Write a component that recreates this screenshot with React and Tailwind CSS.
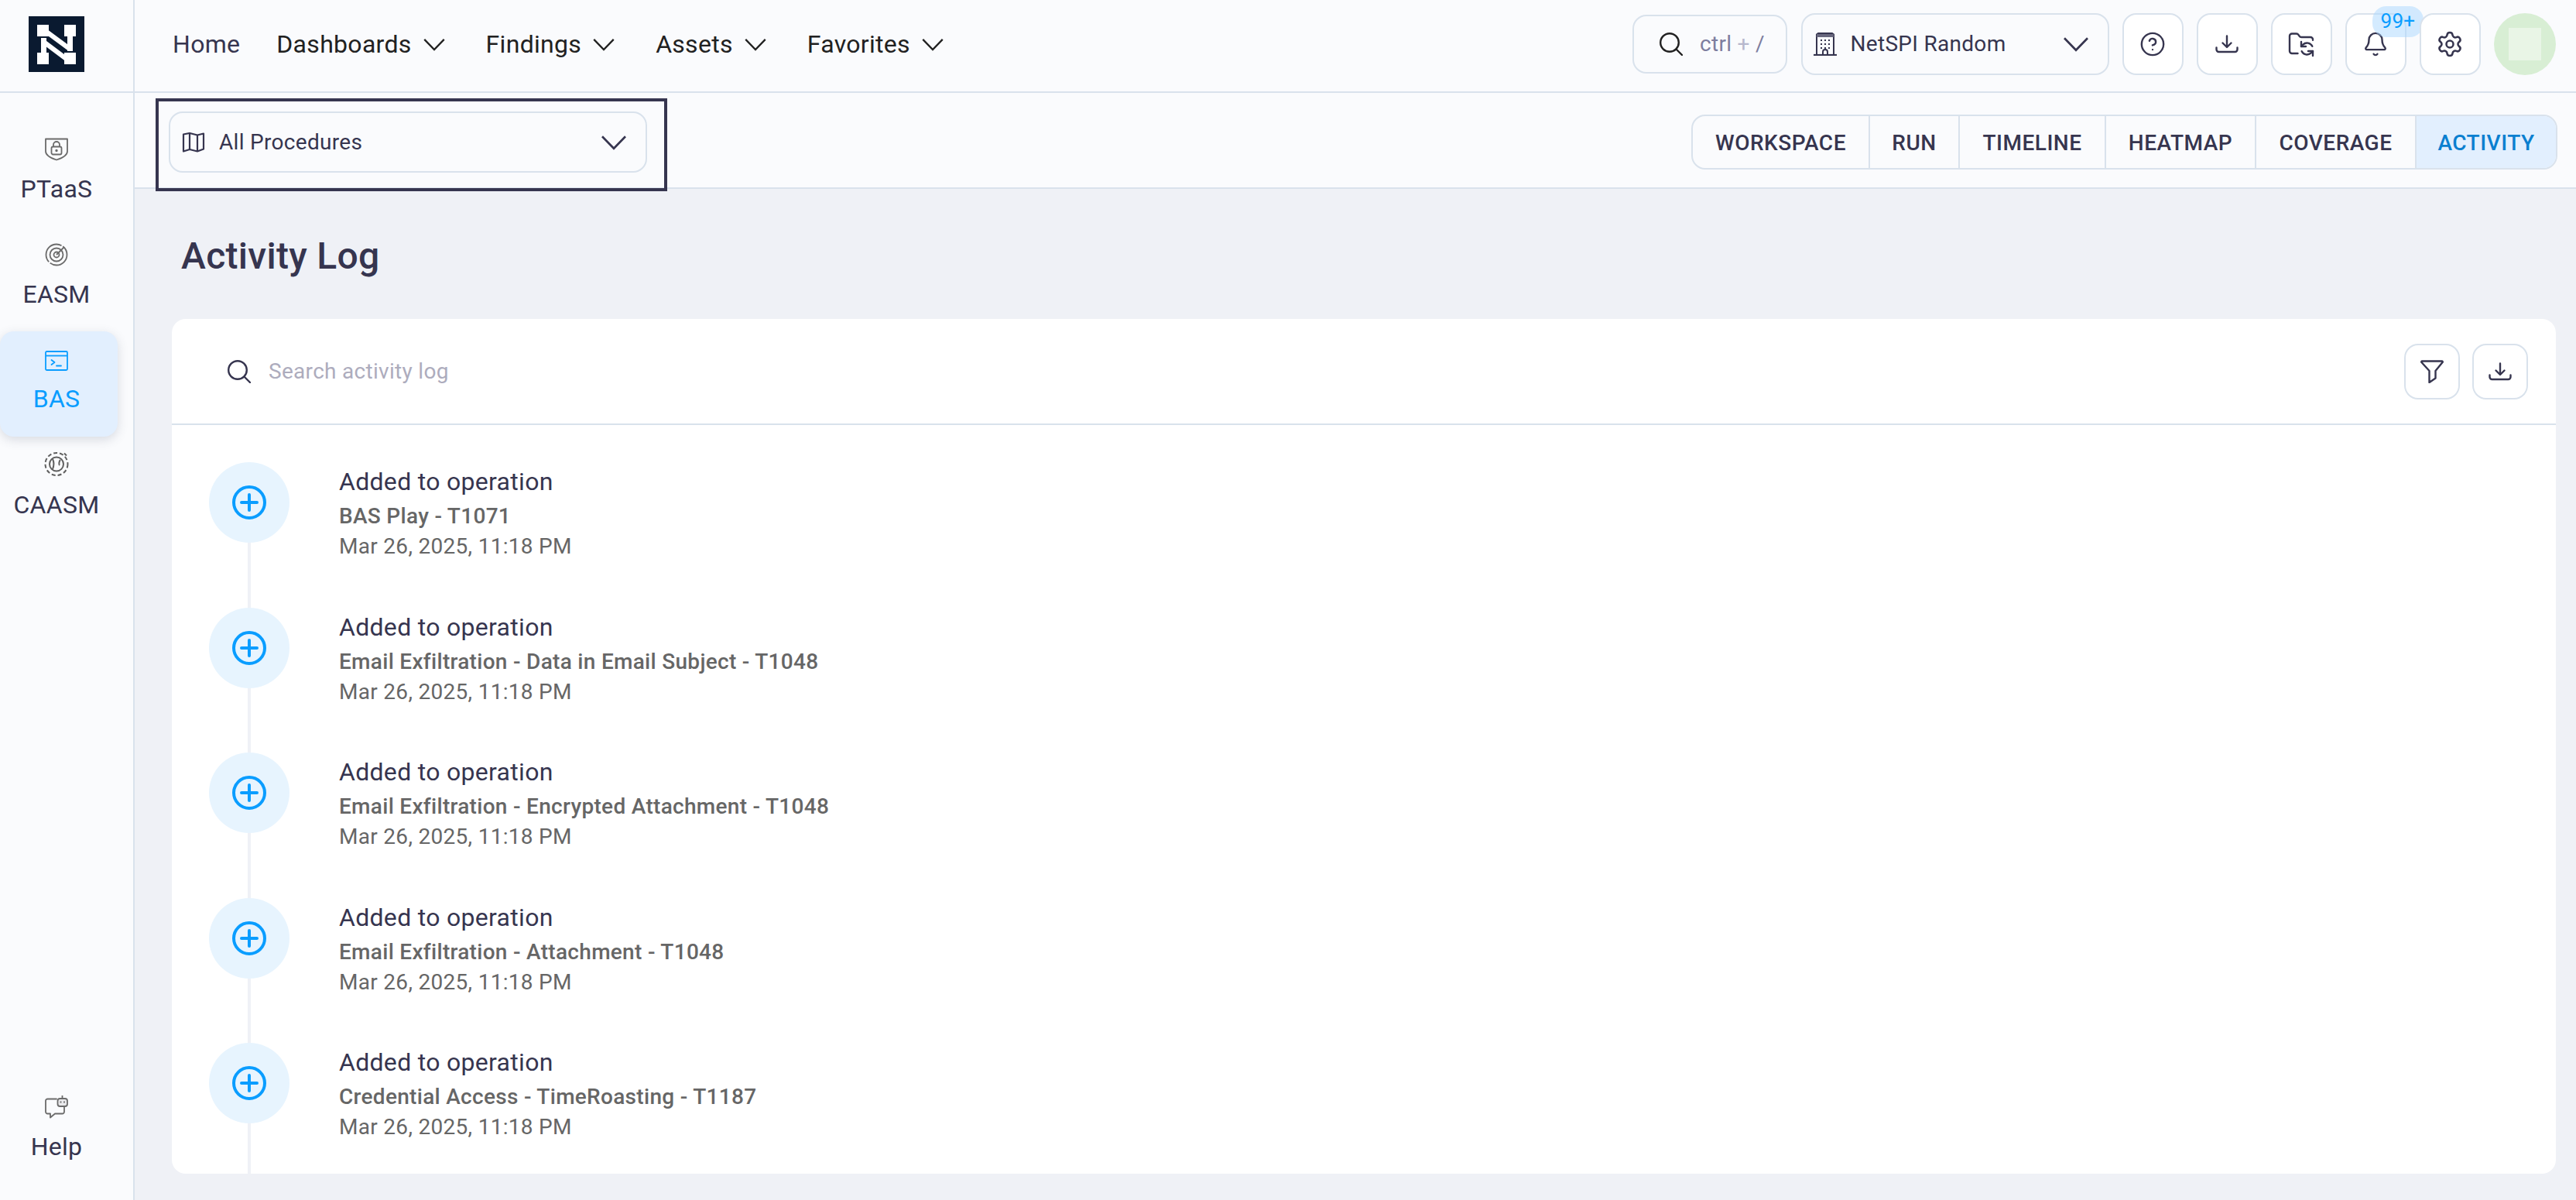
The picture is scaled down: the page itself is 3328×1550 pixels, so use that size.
import { CircleHelp, FolderSync, Bell, Settings } from 'lucide-react';

const NAV = [
  { label: 'Home', tight: true },
  { label: 'Dashboards', menu: true },
  { label: 'Findings', menu: true },
  { label: 'Assets', menu: true },
  { label: 'Favorites', menu: true },
];

const TABS = [
  { label: 'WORKSPACE', w: 'w-[227px]' },
  { label: 'RUN', w: 'w-[116px]' },
  { label: 'TIMELINE', w: 'w-[189px]' },
  { label: 'HEATMAP', w: 'w-[194px]' },
  { label: 'COVERAGE', w: 'w-[207px]' },
  { label: 'ACTIVITY', w: 'w-[182px]', active: true },
];

const ACTIVITY = [
  'BAS Play - T1071',
  'Email Exfiltration - Data in Email Subject - T1048',
  'Email Exfiltration - Encrypted Attachment - T1048',
  'Email Exfiltration - Attachment - T1048',
  'Credential Access - TimeRoasting - T1187',
];

function Chevron({ className }) {
  return (
    <svg viewBox="0 0 30 18" fill="none" className={className}>
      <path d="M1.5 2 15 16 28.5 2" stroke="currentColor" strokeWidth="2.4" />
    </svg>
  );
}

function Logo() {
  return (
    <svg viewBox="0 0 72 72" className="w-[72px] h-[72px]">
      <rect width="72" height="72" fill="#0a1a30" />
      <g fill="#fff">
        <rect x="11" y="11" width="15" height="15" />
        <rect x="46" y="11" width="15" height="15" />
        <rect x="11" y="47" width="15" height="15" />
        <rect x="46" y="47" width="15" height="15" />
        <rect x="16" y="28" width="7" height="22" />
        <rect x="50" y="20" width="7" height="25" />
      </g>
      <g stroke="#fff" strokeWidth="6" fill="none">
        <path d="M19 17 53.500 42.500" />
        <path d="M18 32 50 56" />
      </g>
    </svg>
  );
}

function SearchIcon({ className }) {
  return (
    <svg viewBox="0 0 30 30" fill="none" stroke="currentColor" strokeWidth="2.400" strokeLinecap="round" className={className}>
      <circle cx="13" cy="13" r="11.800" />
      <path d="M21.500 21.500 29 29" />
    </svg>
  );
}

function DownloadTray({ className }) {
  return (
    <svg viewBox="0 0 30 24" fill="none" stroke="currentColor" strokeWidth="2.400" strokeLinecap="round" strokeLinejoin="round" className={className}>
      <path d="M15 1.500v14M9.500 10.500 15 16l5.500-5.500" />
      <path d="M1.500 16.500V19a3 3 0 0 0 3 3h21a3 3 0 0 0 3-3v-2.500" />
    </svg>
  );
}

function FunnelIcon() {
  return (
    <svg viewBox="0 0 30 30" fill="none" stroke="currentColor" strokeWidth="2.400" strokeLinejoin="round" className="w-[30px] h-[30px]">
      <path d="M2.500 1.500h25a1 1 0 0 1 .8 1.800L19.500 14v9.500l-8 5.500V14L1.700 3.300a1 1 0 0 1 .8-1.800z" />
    </svg>
  );
}

function MapIcon() {
  return (
    <svg viewBox="0 0 30 26" fill="none" stroke="currentColor" strokeWidth="2.200" strokeLinejoin="round" className="w-[30px] h-[26px]">
      <path d="M2 2.500 10 1l10 2.500L28 1.500v20L20 24.500 10 22l-8 2.500z" />
      <path d="M10 1v21M20 3.500v21" />
    </svg>
  );
}

function ShieldLockIcon() {
  return (
    <svg viewBox="0 0 30 30" fill="none" stroke="#6b6b6b" strokeWidth="1.800" className="w-[30px] h-[30px]">
      <path d="M1 1.500h28v16c0 5-6 8.500-14 11-8-2.500-14-6-14-11z" strokeLinejoin="round" />
      <rect x="8.500" y="11.500" width="13" height="10" rx="2" />
      <path d="M11 11.500V9a4 4 0 0 1 8 0v2.500" />
      <circle cx="15" cy="16.500" r="0.800" fill="#6b6b6b" />
    </svg>
  );
}

function RadarIcon() {
  return (
    <svg viewBox="0 0 30 30" fill="none" stroke="#6b6b6b" strokeWidth="1.800" className="w-[30px] h-[30px]">
      <circle cx="15" cy="15" r="13.500" strokeDasharray="30 2 38 2" />
      <circle cx="15" cy="15" r="8.500" />
      <circle cx="15" cy="15" r="3.500" />
      <path d="M15 15 25 5" />
    </svg>
  );
}

function TerminalIcon() {
  return (
    <svg viewBox="0 0 30 26" fill="none" stroke="#0a9dff" strokeWidth="1.800" className="w-[30px] h-[26px]">
      <rect x="1" y="1" width="28" height="24" rx="1.500" />
      <path d="M1 6.500h28" />
      <path d="M8.500 12l4 3-4 3M15 19.500h6" strokeLinecap="round" strokeLinejoin="round" />
    </svg>
  );
}

function AssetRingIcon() {
  return (
    <svg viewBox="0 0 32 32" fill="none" stroke="#5f5f5f" strokeWidth="2" className="w-[32px] h-[32px] -mt-[3px]">
      <circle cx="16" cy="16.500" r="14.500" strokeDasharray="5 3" />
      <circle cx="16" cy="16.500" r="9" />
      <path d="M11 10c2 4 2 8 0 13M21 11c-2 2-2 6-1 7" />
      <path d="M26 2.500l3 3" />
    </svg>
  );
}

function HelpBotIcon() {
  return (
    <svg viewBox="0 0 30 30" fill="none" stroke="#6b6b6b" strokeWidth="1.800" className="w-[30px] h-[30px]">
      <path d="M15 4.500H3.500a2.500 2.500 0 0 0-2.500 2.500V21a2.500 2.500 0 0 0 2.500 2.500H7l0 5 6-5h9.500a2.500 2.500 0 0 0 2.500-2.500v-7" strokeLinecap="round" strokeLinejoin="round" />
      <rect x="16.500" y="4" width="12.500" height="10" rx="3" fill="#e9e9ec" />
      <path d="M22.500 0v4M20.500 7.500v2M25 7.500v2" />
    </svg>
  );
}

function BuildingIcon() {
  return (
    <svg viewBox="0 0 30 30" fill="none" className="w-[30px] h-[30px]">
      <path d="M4 29V2.500l2-1.500h18l2 1.500V29" stroke="#36354f" strokeWidth="2" />
      <path d="M4 2h22v4H4z" fill="#68677d" />
      <path d="M0 29h30" stroke="#36354f" strokeWidth="2.200" />
      <path d="M9 10h2m3 0h2m3 0h2M9 15h2m3 0h2m3 0h2M9 20h2m3 0h2m3 0h2" stroke="#36354f" strokeWidth="2" />
      <path d="M12 29v-4a3 3 0 0 1 6 0v4" stroke="#36354f" strokeWidth="2" />
    </svg>
  );
}

function SideItem({ icon, label, active }) {
  return (
    <div className={`w-[152px] h-[136px] shrink-0 pr-[6px] flex flex-col items-center ${active ? 'pt-[22px] bg-[#e2effe] rounded-[18px] shadow-[0_4px_14px_rgba(60,70,100,0.18)] text-[#0a9dff]' : 'pt-[21px] text-[#36354f]'}`}>
      <div className="h-[31px] flex items-center justify-center">{icon}</div>
      <span className={`${active ? 'mt-[16px]' : 'mt-[18px]'} text-[32px] leading-[36px]`}>{label}</span>
    </div>
  );
}

function IconButton({ children, badge }) {
  return (
    <div className="relative w-[78.5px] h-[80px] flex items-center justify-center rounded-[18px] border-2 border-[#d9e2ec] bg-white text-[#36354f]">
      {children}
      {badge && (
        <span className="absolute -top-[11px] left-[33px] w-[66px] h-[40px] rounded-[18px] bg-[#a9d8ff]/50 text-[#0a9dff] text-[26px] leading-[38px] text-center">
          {badge}
        </span>
      )}
    </div>
  );
}

function ActivityRow({ text }) {
  return (
    <div className="h-[187.5px] flex shrink-0">
      <div className="w-[104px] flex flex-col items-center">
        <div className="w-[104px] h-[104px] shrink-0 rounded-full bg-[#e7f4fe] flex items-center justify-center">
          <svg viewBox="0 0 44 44" fill="none" stroke="#0a9dff" strokeWidth="4" strokeLinecap="round" className="w-[44px] h-[44px]">
            <circle cx="22" cy="22" r="20" />
            <path d="M22 12v20M12 22h20" />
          </svg>
        </div>
        <div className="w-1 flex-1 bg-[#eff1f6]" />
      </div>
      <div className="ml-16 pt-[7px]">
        <p className="text-[32px] leading-[36px] text-[#36354f]">Added to operation</p>
        <p className="mt-[9px] text-[28px] leading-[36px] font-medium text-[#666666]">{text}</p>
        <p className="mt-[3px] text-[28px] leading-[36px] text-[#666666]">Mar 26, 2025, 11:18 PM</p>
      </div>
    </div>
  );
}

export default function App() {
  return (
    <div className="w-full h-screen flex flex-col overflow-hidden bg-[#eff1f6] font-[family-name:Roboto,sans-serif] tracking-[0.3px] text-[#36354f]">
      {/* Top bar */}
      <header className="h-[120px] shrink-0 flex items-stretch bg-[#fafbfd] border-b-2 border-[#d9e2ec]">
        <div className="w-[174px] shrink-0 border-r-2 border-[#d9e2ec] pl-[37px] pt-[21px]">
          <Logo />
        </div>
        <nav className="flex items-center pl-[49px] pb-1 gap-[52px] text-[32px]">
          {NAV.map((item) => (
            <div key={item.label} className={`flex items-center gap-[14px] ${item.tight ? '-mr-[5px] text-[#36354f]' : 'text-[#212121]'}`}>
              <span>{item.label}</span>
              {item.menu && <Chevron className="w-[30px] h-[17px]" />}
            </div>
          ))}
        </nav>
        <div className="ml-auto flex items-center gap-[17.5px] pr-[26px] pb-1">
          <div className="w-[200px] h-[76px] flex items-center gap-[22px] pl-[33px] rounded-[18px] border-2 border-[#d9e2ec] bg-[#fafbfd]">
            <SearchIcon className="w-[30px] h-[30px] text-[#212121]" />
            <span className="text-[28px] text-[#7e7e9f]">ctrl <span className="text-[#b7b8cd]">+</span> /</span>
          </div>
          <div className="w-[398px] h-[80px] flex items-center pl-[14px] pr-[22px] rounded-[18px] border-2 border-[#d9e2ec] bg-[#fafbfd]">
            <BuildingIcon />
            <span className="ml-[18px] text-[28px]">NetSPI Random</span>
            <Chevron className="ml-auto w-[38px] h-[20px]" />
          </div>
          <IconButton><CircleHelp size={34} strokeWidth={1.7} /></IconButton>
          <IconButton><DownloadTray className="w-[30px] h-[24px]" /></IconButton>
          <IconButton><FolderSync size={36} strokeWidth={1.6} /></IconButton>
          <IconButton badge="99+"><Bell size={34} strokeWidth={1.7} /></IconButton>
          <IconButton><Settings size={36} strokeWidth={1.7} /></IconButton>
          <div className="w-[80px] h-[80px] rounded-full bg-[#d8eed4] flex items-center justify-center">
            <div className="w-[42px] h-[42px] bg-[#e9f5e6]" />
          </div>
        </div>
      </header>

      <div className="flex-1 min-h-0 flex">
        {/* Left rail */}
        <aside className="w-[174px] shrink-0 flex flex-col bg-[#fafbfd] border-r-2 border-[#d9e2ec] pt-[36px] pb-[51px]">
          <SideItem icon={<ShieldLockIcon />} label="PTaaS" />
          <SideItem icon={<RadarIcon />} label="EASM" />
          <SideItem active icon={<TerminalIcon />} label="BAS" />
          <SideItem icon={<AssetRingIcon />} label="CAASM" />
          <div className="mt-auto w-[152px] pr-[6px] flex flex-col items-center">
            <HelpBotIcon />
            <span className="mt-[18px] text-[32px] leading-[36px]">Help</span>
          </div>
        </aside>

        <main className="flex-1 min-w-0 flex flex-col pb-[34px]">
          {/* Sub bar */}
          <div className="h-[124px] shrink-0 flex items-center justify-between pt-[5px] pl-[44px] pr-[24px] bg-[#fafbfd] border-b-2 border-[#d9e2ec]">
            <div className="relative w-[618px] h-[79px] flex items-center pl-[15px] pr-[22px] rounded-[18px] border-2 border-[#d9e2ec]">
              <MapIcon />
              <span className="ml-[18px] text-[28px]">All Procedures</span>
              <Chevron className="ml-auto w-[38px] h-[20px]" />
              <div className="absolute -left-[19px] -top-[19px] w-[661px] h-[120px] border-4 border-[#36354f] pointer-events-none" />
            </div>
            <div className="flex h-[71px] rounded-[18px] border-2 border-[#d9e2ec] overflow-hidden">
              {TABS.map((tab, i) => (
                <div
                  key={tab.label}
                  className={`${tab.w} flex items-center justify-center pt-[2px] text-[28px] font-medium tracking-[0.5px] ${i > 0 ? 'border-l-2 border-[#d9e2ec]' : ''} ${tab.active ? 'bg-[#e2effe] text-[#0a7fd0]' : 'text-[#36354f]'}`}
                >
                  {tab.label}
                </div>
              ))}
            </div>
          </div>

          <h1 className="pl-[60px] pt-[59px] mb-[53px] text-[48px] leading-[56px] font-medium">Activity Log</h1>

          {/* Activity card */}
          <section className="ml-[48px] mr-[26px] flex-1 min-h-0 flex flex-col overflow-hidden rounded-[18px] bg-white">
            <div className="h-[137px] shrink-0 flex items-center pl-[72px] pr-[36px] border-b-2 border-[#d9e2ec]">
              <SearchIcon className="w-[30px] h-[30px] text-[#36354f]" />
              <span className="ml-[23px] text-[28px] text-[#adacbd]">Search activity log</span>
              <div className="ml-auto flex gap-4">
                <div className="w-[72px] h-[72px] flex items-center justify-center rounded-[18px] border-2 border-[#d9e2ec]">
                  <FunnelIcon />
                </div>
                <div className="w-[72px] h-[72px] flex items-center justify-center rounded-[18px] border-2 border-[#d9e2ec]">
                  <DownloadTray className="w-[30px] h-[24px]" />
                </div>
              </div>
            </div>
            <div className="pt-[48px] pl-[48px] flex flex-col">
              {ACTIVITY.map((text) => (
                <ActivityRow key={text} text={text} />
              ))}
            </div>
          </section>
        </main>
      </div>
    </div>
  );
}
